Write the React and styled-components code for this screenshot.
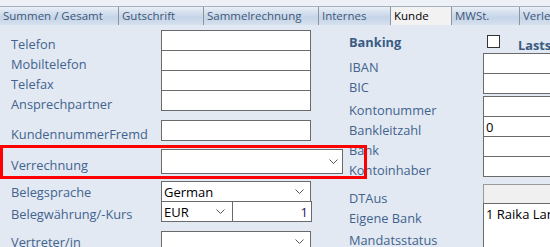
import React from 'react';
import styled, { createGlobalStyle } from 'styled-components';

const GlobalStyle = createGlobalStyle`
  html, body {
    margin: 0;
    padding: 0;
    overflow: hidden;
    background: #e2e9f2;
  }
  body {
    font-family: "Open Sans", "Noto Sans", "DejaVu Sans", sans-serif;
  }
`;

const Page = styled.div`
  position: relative;
  width: 550px;
  height: 247px;
  overflow: hidden;
  background: #e2e9f2;
`;

const TopStrip = styled.div`
  height: 6px;
  background: #edf1f7;
`;

const TabBar = styled.div`
  display: flex;
  height: 19px;
  border-top: 1px solid #a6b0bd;
  box-sizing: border-box;
  background: linear-gradient(#eaf0f7 0%, #d2deed 35%, #c5d4e8 60%, #d6e1ee 100%);
`;

const Tab = styled.div`
  flex: none;
  box-sizing: border-box;
  width: ${(p) => p.$w}px;
  padding-left: 3px;
  border-right: 1px solid #8a95a2;
  font-size: 11.5px;
  line-height: 17px;
  white-space: nowrap;
  overflow: hidden;
  color: ${(p) => (p.$active ? '#000' : '#3e5879')};
  background: ${(p) => (p.$active ? '#f2f2f2' : 'transparent')};
`;

const Body = styled.div`
  display: flex;
  gap: 38px;
  padding: 5px 0 0 11px;
`;

const Column = styled.div`
  display: flex;
  flex-direction: column;
  flex: none;
  width: ${(p) => p.$w}px;
`;

const Row = styled.div`
  display: grid;
  grid-template-columns: ${(p) => p.$label}px 1fr;
  height: ${(p) => p.$h || 20}px;
  margin-top: ${(p) => p.$mt || 0}px;
  align-items: start;
`;

const Label = styled.div`
  font-size: 12.8px;
  line-height: 16px;
  padding-top: ${(p) => (p.$dy ?? 19) - 13}px;
  color: ${(p) => (p.$bold ? '#3a5b84' : '#43638e')};
  font-weight: ${(p) => (p.$bold ? 700 : 400)};
  white-space: nowrap;
`;

const Field = styled.div`
  box-sizing: border-box;
  display: flex;
  align-items: center;
  justify-content: ${(p) => (p.$right ? 'flex-end' : 'space-between')};
  width: ${(p) => (p.$w ? `${p.$w}px` : 'auto')};
  height: ${(p) => (p.$h || 20) + 1}px;
  padding: 0 ${(p) => p.$pr ?? 4}px 0 2px;
  background: ${(p) => (p.$disabled ? '#f0f0f0' : '#fff')};
  border: 1px solid ${(p) => (p.$disabled ? '#9a9a9a' : '#6a6a6a')};
  font-size: 13px;
  color: ${(p) => p.$color || '#000'};
  white-space: nowrap;
  overflow: hidden;
  ${(p) => p.$tall && 'align-items: flex-start; padding-top: 1px;'}
`;

const Pair = styled.div`
  display: flex;
  & > * + * {
    margin-left: -1px;
  }
`;

const HeaderCell = styled.div`
  display: flex;
  align-items: flex-start;
  padding: 5px 0 0 4px;
  gap: 18px;
`;

const CheckBox = styled.div`
  flex: none;
  width: 13px;
  height: 13px;
  box-sizing: border-box;
  background: #fff;
  border: 1px solid #333;
`;

const BoldText = styled.span`
  font-size: 12.8px;
  line-height: 16px;
  font-weight: 700;
  color: #3a5b84;
  margin-top: 2px;
`;

const Highlight = styled.div`
  position: absolute;
  left: 0;
  top: 145px;
  width: 367px;
  height: 34px;
  box-sizing: border-box;
  border: 3px solid #ff0000;
  pointer-events: none;
`;

const Chevron = () => (
  <svg width="9" height="5" viewBox="0 0 9 5" style={{ flex: 'none' }}>
    <polyline points="0.5,0.5 4.5,4.5 8.5,0.5" fill="none" stroke="#555" strokeWidth="1" />
  </svg>
);

const tabs = [
  { label: 'Summen / Gesamt', w: 119 },
  { label: 'Gutschrift', w: 85 },
  { label: 'Sammelrechnung', w: 115 },
  { label: 'Internes', w: 72 },
  { label: 'Kunde', w: 61, active: true },
  { label: 'MWSt.', w: 68 },
  { label: 'Verleih', w: 80 },
];

export default function App() {
  return (
    <Page>
      <GlobalStyle />
      <TopStrip />
      <TabBar>
        {tabs.map((t) => (
          <Tab key={t.label} $w={t.w} $active={t.active}>
            {t.label}
          </Tab>
        ))}
      </TabBar>
      <Body>
        <Column $w={300}>
          <Row $label={150}>
            <Label>Telefon</Label>
            <Field />
          </Row>
          <Row $label={150}>
            <Label>Mobiltelefon</Label>
            <Field />
          </Row>
          <Row $label={150}>
            <Label>Telefax</Label>
            <Field />
          </Row>
          <Row $label={150}>
            <Label>Ansprechpartner</Label>
            <Field />
          </Row>
          <Row $label={150} $mt={10}>
            <Label>KundennummerFremd</Label>
            <Field />
          </Row>
          <Row $label={150} $mt={9} $h={24}>
            <Label $dy={21}>Verrechnung</Label>
            <Field $h={24} $w={182} $pr={4}>
              <span />
              <Chevron />
            </Field>
          </Row>
          <Row $label={150} $mt={8}>
            <Label $dy={16}>Belegsprache</Label>
            <Field $pr={6}>
              German
              <Chevron />
            </Field>
          </Row>
          <Row $label={150}>
            <Label $dy={18}>Belegwährung/-Kurs</Label>
            <Pair>
              <Field $w={72} $pr={7}>
                EUR
                <Chevron />
              </Field>
              <Field $w={80} $right $pr={3} $color="#2a1466">
                1
              </Field>
            </Pair>
          </Row>
          <Row $label={150} $mt={10}>
            <Label $dy={16}>Vertreter/in</Label>
            <Field $pr={6}>
              <span />
              <Chevron />
            </Field>
          </Row>
        </Column>
        <Column $w={240}>
          <Row $label={134} $h={23}>
            <Label $bold $dy={17}>Banking</Label>
            <HeaderCell>
              <CheckBox />
              <BoldText>Lastschrift</BoldText>
            </HeaderCell>
          </Row>
          <Row $label={134}>
            <Label>IBAN</Label>
            <Field />
          </Row>
          <Row $label={134}>
            <Label>BIC</Label>
            <Field />
          </Row>
          <Row $label={134} $mt={3}>
            <Label>Kontonummer</Label>
            <Field />
          </Row>
          <Row $label={134}>
            <Label>Bankleitzahl</Label>
            <Field>0</Field>
          </Row>
          <Row $label={134}>
            <Label>Bank</Label>
            <Field />
          </Row>
          <Row $label={134}>
            <Label>Kontoinhaber</Label>
            <Field />
          </Row>
          <Row $label={134} $mt={8} $h={19}>
            <Label>DTAus</Label>
            <Field $h={19} $disabled />
          </Row>
          <Row $label={134}>
            <Label $dy={20}>Eigene Bank</Label>
            <Field $h={60} $tall>
              1 Raika Landeck
            </Field>
          </Row>
          <Row $label={134}>
            <Label $dy={22}>Mandatsstatus</Label>
          </Row>
        </Column>
      </Body>
      <Highlight />
    </Page>
  );
}
